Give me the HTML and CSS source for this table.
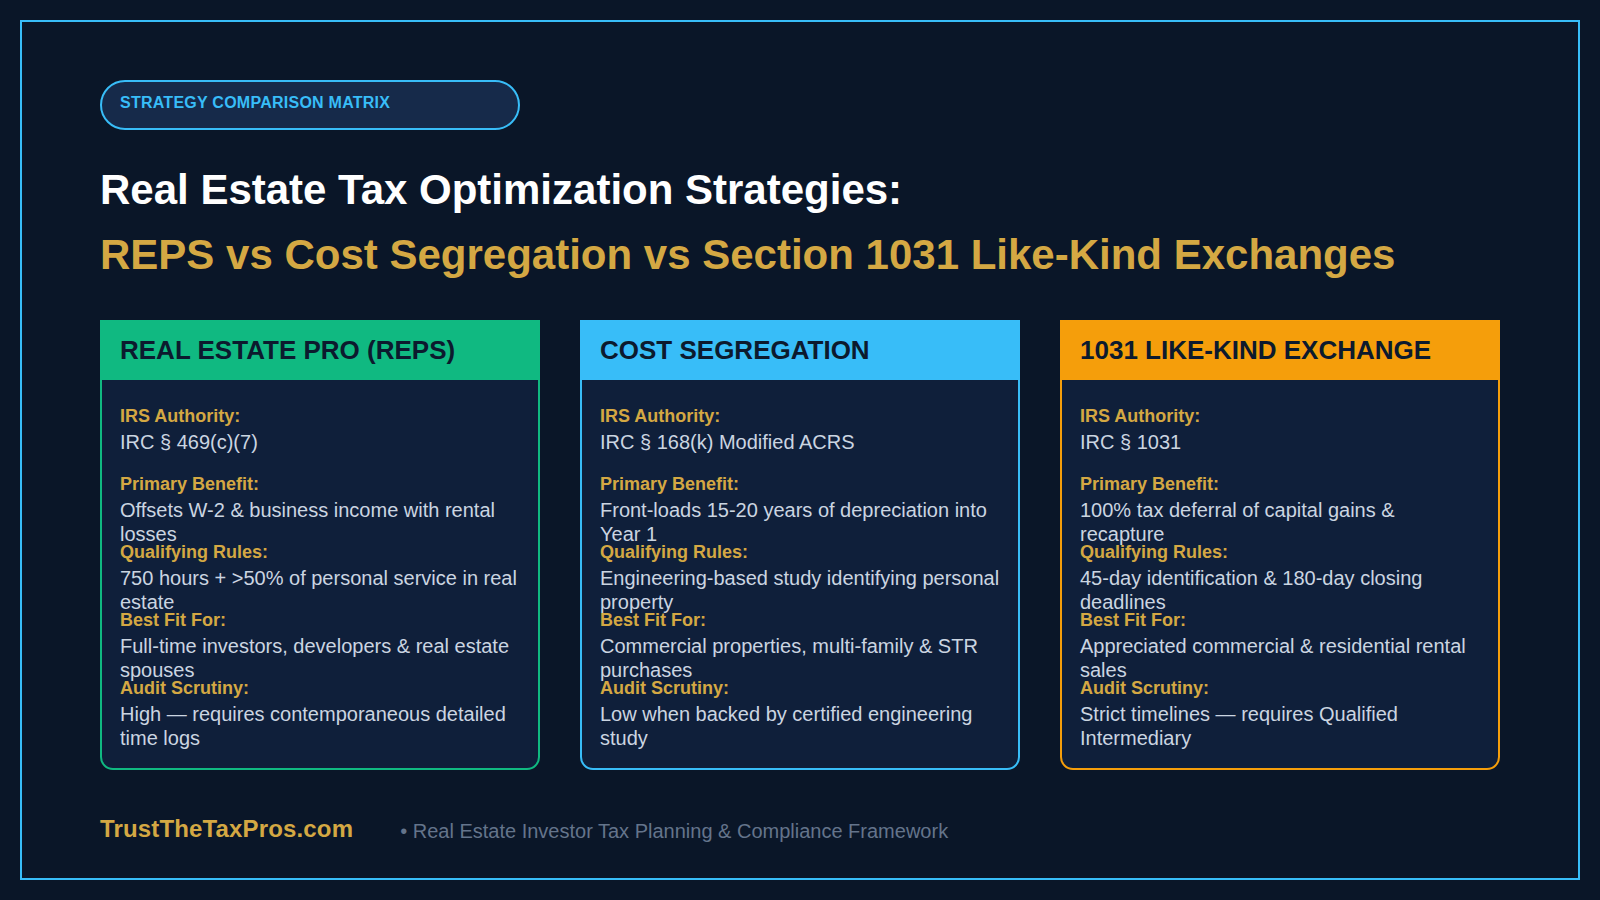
FILE: index.html
```html
<!DOCTYPE html>
<html lang="en">
<head>
<meta charset="utf-8">
<title>Strategy Comparison Matrix</title>
<link rel="stylesheet" href="styles.css">
</head>
<body>
<div class="frame">
  <div class="pill">STRATEGY COMPARISON MATRIX</div>
  <h1 class="title">Real Estate Tax Optimization Strategies:</h1>
  <h2 class="subtitle">REPS vs Cost Segregation vs Section 1031 Like-Kind Exchanges</h2>

  <div class="cards">
    <section class="card card-green">
      <header class="card-head">REAL ESTATE PRO (REPS)</header>
      <div class="card-body">
        <div class="item"><div class="label">IRS Authority:</div><div class="value">IRC § 469(c)(7)</div></div>
        <div class="item"><div class="label">Primary Benefit:</div><div class="value">Offsets W-2 &amp; business income with rental losses</div></div>
        <div class="item"><div class="label">Qualifying Rules:</div><div class="value">750 hours + &gt;50% of personal service in real estate</div></div>
        <div class="item"><div class="label">Best Fit For:</div><div class="value">Full-time investors, developers &amp; real estate spouses</div></div>
        <div class="item"><div class="label">Audit Scrutiny:</div><div class="value">High — requires contemporaneous detailed time logs</div></div>
      </div>
    </section>

    <section class="card card-blue">
      <header class="card-head">COST SEGREGATION</header>
      <div class="card-body">
        <div class="item"><div class="label">IRS Authority:</div><div class="value">IRC § 168(k) Modified ACRS</div></div>
        <div class="item"><div class="label">Primary Benefit:</div><div class="value">Front-loads 15-20 years of depreciation into Year 1</div></div>
        <div class="item"><div class="label">Qualifying Rules:</div><div class="value">Engineering-based study identifying personal property</div></div>
        <div class="item"><div class="label">Best Fit For:</div><div class="value">Commercial properties, multi-family &amp; STR purchases</div></div>
        <div class="item"><div class="label">Audit Scrutiny:</div><div class="value">Low when backed by certified engineering study</div></div>
      </div>
    </section>

    <section class="card card-orange">
      <header class="card-head">1031 LIKE-KIND EXCHANGE</header>
      <div class="card-body">
        <div class="item"><div class="label">IRS Authority:</div><div class="value">IRC § 1031</div></div>
        <div class="item"><div class="label">Primary Benefit:</div><div class="value">100% tax deferral of capital gains &amp; recapture</div></div>
        <div class="item"><div class="label">Qualifying Rules:</div><div class="value">45-day identification &amp; 180-day closing deadlines</div></div>
        <div class="item"><div class="label">Best Fit For:</div><div class="value">Appreciated commercial &amp; residential rental sales</div></div>
        <div class="item"><div class="label">Audit Scrutiny:</div><div class="value">Strict timelines — requires Qualified Intermediary</div></div>
      </div>
    </section>
  </div>

  <footer class="footer">
    <span class="brand">TrustTheTaxPros.com</span>
    <span class="tagline">• Real Estate Investor Tax Planning &amp; Compliance Framework</span>
  </footer>
</div>
</body>
</html>
```

FILE: styles.css
```css
* { box-sizing: border-box; }

html, body {
  margin: 0;
  padding: 0;
}

body {
  width: 1600px;
  height: 900px;
  padding: 20px;
  background: #0a1628;
  font-family: "Liberation Sans", Arial, sans-serif;
  color: #ffffff;
  overflow: hidden;
}

.frame {
  width: 1560px;
  height: 860px;
  border: 2px solid #38bdf8;
  padding: 58px 78px 0;
  display: flex;
  flex-direction: column;
}

.pill {
  width: 420px;
  height: 50px;
  border: 2px solid #38bdf8;
  border-radius: 25px;
  background: #162a4a;
  color: #38bdf8;
  font-size: 16px;
  font-weight: 700;
  line-height: 18px;
  letter-spacing: 0.25px;
  padding: 12px 18px 0;
}

.title {
  margin: 35px 0 0;
  font-size: 42px;
  line-height: 50px;
  font-weight: 700;
  color: #ffffff;
}

.subtitle {
  margin: 15px 0 0;
  font-size: 42px;
  line-height: 50px;
  font-weight: 700;
  color: #d4a843;
}

.cards {
  margin-top: 40px;
  display: flex;
  gap: 40px;
}

.card {
  width: 440px;
  height: 450px;
  border: 2px solid;
  border-radius: 0 0 13px 13px;
  background: #0f1f3a;
  display: flex;
  flex-direction: column;
}

.card-green { border-color: #10b981; }
.card-blue { border-color: #38bdf8; }
.card-orange { border-color: #f59e0b; }

.card-head {
  height: 58px;
  display: flex;
  align-items: center;
  padding: 0 18px 2px;
  font-size: 26px;
  font-weight: 700;
  color: #0c1a2e;
}

.card-green .card-head { background: #10b981; }
.card-blue .card-head { background: #38bdf8; }
.card-orange .card-head { background: #f59e0b; }

.card-body {
  flex: 1;
  padding: 26px 18px 22px;
  display: grid;
  grid-template-rows: repeat(5, 68px);
}

.item {
  min-height: 0;
}

.label {
  font-size: 18px;
  font-weight: 700;
  color: #d4a843;
}

.value {
  margin-top: 3px;
  font-size: 20px;
  line-height: 24px;
  color: #cbd5e1;
}

.footer {
  margin-top: 45px;
  display: flex;
  align-items: flex-end;
  gap: 47px;
}

.brand {
  font-size: 24px;
  font-weight: 700;
  letter-spacing: 0.15px;
  color: #d4a843;
}

.tagline {
  font-size: 20px;
  color: #64748b;
}
```
